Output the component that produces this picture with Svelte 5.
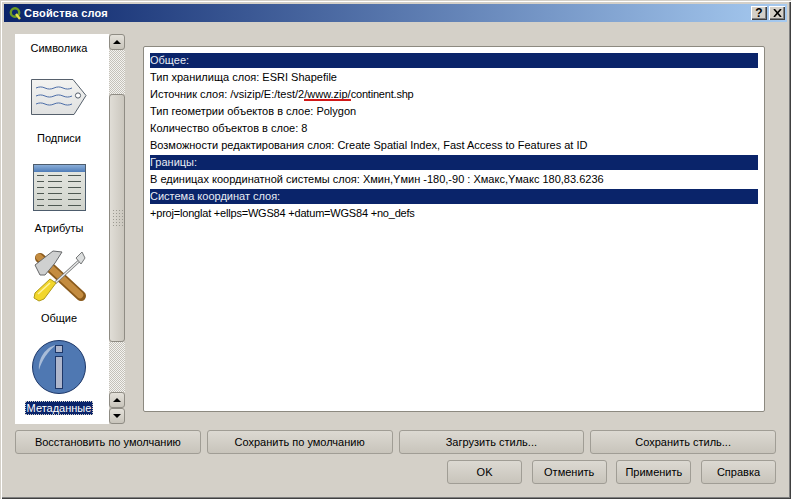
<script lang="ts">
  const pages = ['Символика', 'Подписи', 'Атрибуты', 'Общие', 'Метаданные'];
  const wave = 'c3 -1.4 6 -1.4 9 0 s6 1.4 9 0 s6 -1.4 9 0 s6 1.4 9 0';
  const tableRows = [11, 17, 23, 29, 35, 41];
  const tableCols = [[4, 11], [15, 29], [35, 48]];
  const topButtons = ['Восстановить по умолчанию', 'Сохранить по умолчанию', 'Загрузить стиль...', 'Сохранить стиль...'];
  const bottomButtons = ['OK', 'Отменить', 'Применить', 'Справка'];
</script>

{#snippet icon(name: string)}
  {#if name === 'Подписи'}
    <svg width="56" height="36" viewBox="0 0 56 36">
      <defs>
        <linearGradient id="tag" x1="0" y1="0" x2="0" y2="1">
          <stop offset="0" stop-color="#f3f3f1" />
          <stop offset="1" stop-color="#e0e1e1" />
        </linearGradient>
      </defs>
      <path d="M0.5 0.5H42L55 16.5L43 35.5H0.5Z" fill="url(#tag)" stroke="#56606c" />
      <circle cx="47" cy="16.5" r="2.6" fill="#fff" stroke="#56606c" />
      <g fill="none" stroke="#4c6da8">
        <path d="M5 9{wave}" />
        <path d="M5 17{wave}" />
        <path d="M5 25{wave}" />
      </g>
    </svg>
  {:else if name === 'Атрибуты'}
    <svg width="53" height="47" viewBox="0 0 53 47">
      <defs>
        <linearGradient id="head" x1="0" y1="0" x2="0" y2="1">
          <stop offset="0" stop-color="#8aaed8" />
          <stop offset="1" stop-color="#4f7cb8" />
        </linearGradient>
        <linearGradient id="sheet" x1="0" y1="0" x2="0" y2="1">
          <stop offset="0" stop-color="#e6e8e2" />
          <stop offset="1" stop-color="#d0d3cc" />
        </linearGradient>
      </defs>
      <rect x="0.5" y="0.5" width="52" height="46" fill="url(#sheet)" stroke="#4d5c6c" />
      <rect x="1" y="1" width="51" height="7" fill="url(#head)" />
      <g stroke="#4e5852">
        {#each tableRows as y}
          {#each tableCols as [a, b]}
            <line x1={a} x2={b} y1={y + 0.5} y2={y + 0.5} />
          {/each}
        {/each}
      </g>
    </svg>
  {:else if name === 'Общие'}
    <svg width="54" height="54" viewBox="0 0 54 54">
      <path d="M8 8L49 46" stroke="#8a5a1c" stroke-width="10" stroke-linecap="round" />
      <path d="M7 7L48 45" stroke="#c48c40" stroke-width="6.5" stroke-linecap="round" />
      <path d="M3 15L21 1L30 2L23 13L13 25L8 25Z" fill="#cfd0d0" stroke="#66686a" />
      <path d="M47 11L23 33" stroke="#77797a" stroke-width="3" />
      <path d="M47 11L23 33" stroke="#efefef" stroke-width="1.2" />
      <path d="M44 8L50 2L53 8L49 14Z" fill="#dcdede" stroke="#77797a" />
      <path d="M24 33L18 29L3 43L2 48L7 51L12 49Z" fill="#f2d62c" stroke="#b09a18" />
      <path d="M6 44L18 33" stroke="#fff3a0" stroke-width="1.5" />
    </svg>
  {:else if name === 'Метаданные'}
    <svg width="54" height="54" viewBox="0 0 54 54">
      <circle cx="27" cy="27" r="26.5" fill="#4f78b2" stroke="#1d3768" />
      <path d="M7 30C6 18 14 7 24 5C16 11 10 20 7 30Z" fill="#a8bcd8" />
      <rect x="23.5" y="5.5" width="7" height="7" fill="#aeb6cc" stroke="#1d3768" />
      <rect x="23.5" y="16.5" width="7" height="32" fill="#aeb6cc" stroke="#1d3768" />
    </svg>
  {/if}
{/snippet}

<div class="window">
  <header class="titlebar">
    <svg class="logo" width="13" height="14" viewBox="0 0 13 14">
      <circle cx="6" cy="6.5" r="4.2" fill="none" stroke="#6f9c24" stroke-width="2.4" />
      <path d="M7 8L11 13" stroke="#e6e04a" stroke-width="2.4" />
    </svg>
    <span class="title">Свойства слоя</span>
    <div class="caption-buttons">
      <button class="caption">?</button>
      <button class="caption">
        <svg width="9" height="8" viewBox="0 0 9 8">
          <path d="M1 0L8 8M8 0L1 8" stroke="#000" stroke-width="1.6" fill="none" />
        </svg>
      </button>
    </div>
  </header>

  <main class="content">
    <div class="top">
      <div class="sidebar">
        <nav class="list">
          {#each pages as page, i}
            <div class="item">
              {#if i > 0}
                <div class="item-icon">{@render icon(page)}</div>
              {:else}
                <div class="item-icon"></div>
              {/if}
              <span class="item-label" class:selected={page === 'Метаданные'}>{page}</span>
            </div>
          {/each}
        </nav>
        <div class="scrollbar">
          <button class="arrow"><span class="tri up"></span></button>
          <div class="track short"></div>
          <div class="thumb"><div class="grip"></div></div>
          <div class="track"></div>
          <button class="arrow"><span class="tri up"></span></button>
          <button class="arrow"><span class="tri down"></span></button>
        </div>
      </div>

      <section class="metadata">
        <div class="bar">Общее:</div>
        <div class="row">Тип хранилища слоя: ESRI Shapefile</div>
        <div class="row">Источник слоя: /vsizip/E:/test/2<span class="mark">/www.zip/</span><span class="tight">continent.shp</span></div>
        <div class="row">Тип геометрии объектов в слое: Polygon</div>
        <div class="row">Количество объектов в слое: 8</div>
        <div class="row">Возможности редактирования слоя: Create Spatial Index, Fast Access to Features at ID</div>
        <div class="bar">Границы:</div>
        <div class="row">В единицах координатной системы слоя: Xмин,Yмин -180,-90 : Xмакс,Yмакс 180,83.6236</div>
        <div class="bar">Система координат слоя:</div>
        <div class="row tight">+proj=longlat +ellps=WGS84 +datum=WGS84 +no_defs</div>
      </section>
    </div>

    <div class="style-buttons">
      {#each topButtons as label}
        <button class="btn">{label}</button>
      {/each}
    </div>
    <div class="dialog-buttons">
      {#each bottomButtons as label}
        <button class="btn">{label}</button>
      {/each}
    </div>
  </main>
</div>

<style>
  :global(body) {
    background: #d4d0c8;
  }

  .window {
    width: 791px;
    height: 499px;
    box-sizing: border-box;
    padding: 4px;
    background: #d4d0c8;
    font-family: "Liberation Sans", Arial, sans-serif;
    font-size: 11px;
    color: #000;
    box-shadow: inset 1px 1px 0 #d4d0c8, inset 2px 2px 0 #fff, inset -1px -1px 0 #404040, inset -2px -2px 0 #808080;
  }

  .titlebar {
    height: 18px;
    display: flex;
    align-items: center;
    padding-left: 5px;
    background: linear-gradient(to right, #0a246a, #a6caf0);
  }

  .logo {
    margin-right: 2px;
  }

  .title {
    color: #fff;
    font-weight: bold;
    font-size: 11px;
    letter-spacing: 0.2px;
  }

  .caption-buttons {
    margin-left: auto;
    margin-right: 2px;
    display: flex;
    gap: 2px;
  }

  button {
    font: inherit;
    color: inherit;
    padding: 0;
    margin: 0;
  }

  .caption {
    width: 16px;
    height: 14px;
    display: flex;
    align-items: center;
    justify-content: center;
    border: none;
    background: #d4d0c8;
    font-weight: bold;
    font-size: 12px;
    box-shadow: inset 1px 1px 0 #fff, inset -1px -1px 0 #404040, inset -2px -2px 0 #808080;
  }

  .content {
    padding: 12px 11px 0;
    display: flex;
    flex-direction: column;
    gap: 6px;
  }

  .top {
    height: 390px;
    display: flex;
  }

  .sidebar {
    width: 110px;
    display: flex;
    flex: none;
  }

  .list {
    width: 94px;
    flex: none;
    background: #fff;
    overflow: hidden;
    display: flex;
    flex-direction: column;
    justify-content: flex-end;
    padding: 0 6px 9px 0;
    box-sizing: border-box;
  }

  .item {
    flex: none;
    height: 75px;
    margin-top: 15px;
    display: flex;
    flex-direction: column;
    align-items: center;
  }

  .item-icon {
    height: 54px;
    margin-bottom: 7px;
    display: flex;
    align-items: center;
    justify-content: center;
  }

  .item-label {
    height: 14px;
    line-height: 14px;
    padding: 0 2px;
    white-space: nowrap;
  }

  .selected {
    background: #0a246a;
    color: #fff;
    outline: 1px dotted #d4d0c8;
    outline-offset: -1px;
  }

  .scrollbar {
    width: 16px;
    display: flex;
    flex-direction: column;
  }

  .arrow {
    flex: none;
    height: 16px;
    display: flex;
    align-items: center;
    justify-content: center;
    border: 1px solid #8f8c84;
    border-radius: 3px;
    background: linear-gradient(to bottom, #e4e1da, #c8c4bb);
  }

  .tri {
    width: 0;
    height: 0;
    border-left: 4px solid transparent;
    border-right: 4px solid transparent;
  }

  .tri.up {
    border-bottom: 4px solid #000;
  }

  .tri.down {
    border-top: 4px solid #000;
  }

  .track {
    flex: 1;
    background: repeating-conic-gradient(#c4c1b9 0 25%, #f4f3f0 0 50%) 0 0 / 2px 2px;
  }

  .track.short {
    flex: none;
    height: 44px;
  }

  .thumb {
    flex: none;
    height: 248px;
    box-sizing: border-box;
    border: 1px solid #8f8c84;
    border-radius: 3px;
    background: linear-gradient(to right, #e0ddd6, #cbc7be);
    display: flex;
    align-items: center;
    justify-content: center;
  }

  .grip {
    width: 11px;
    height: 19px;
    background: radial-gradient(circle, #9c9a92 0.8px, transparent 1px) 0 0 / 3px 3px;
  }

  .metadata {
    flex: 1;
    margin: 12px 11px 12px 18px;
    padding: 6px;
    border: 1px solid #8c8980;
    background: #fff;
    border-radius: 2px;
    display: flex;
    flex-direction: column;
    gap: 2px;
  }

  .bar,
  .row {
    height: 15px;
    line-height: 15px;
    white-space: nowrap;
  }

  .bar {
    background: #0a246a;
    color: #e8ecf4;
  }

  .tight {
    letter-spacing: -0.2px;
  }

  .mark {
    position: relative;
  }

  .mark::after {
    content: "";
    position: absolute;
    left: 0;
    right: 0;
    bottom: -1px;
    height: 2px;
    background: #d01818;
  }

  .style-buttons {
    display: grid;
    grid-template-columns: repeat(4, 1fr);
    gap: 6px;
  }

  .dialog-buttons {
    display: flex;
    justify-content: flex-end;
    gap: 9.67px;
  }

  .dialog-buttons .btn {
    width: 75px;
  }

  .btn {
    height: 24px;
    border: 1px solid #a09d95;
    border-radius: 3px;
    background: linear-gradient(to bottom, #dcd9d2, #c8c4bb);
  }
</style>
